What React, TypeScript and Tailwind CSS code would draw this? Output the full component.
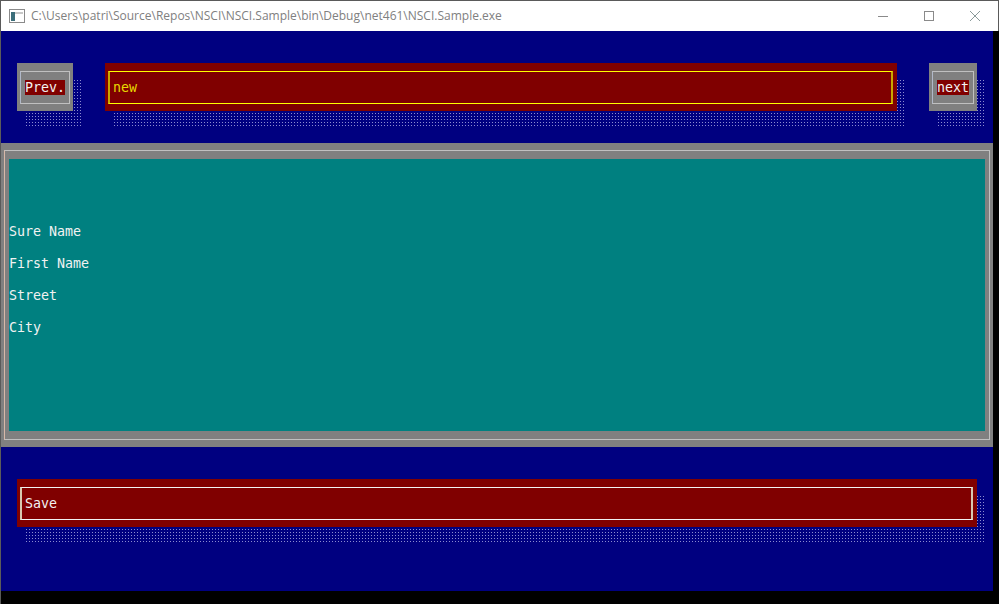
const mono = "font-['DejaVu_Sans_Mono','Liberation_Mono',monospace] text-[13.3px] leading-[16px]";

const Shadowed: React.FC<{ className: string; children: React.ReactNode }> = ({ className, children }) => (
  <div className={"relative shrink-0 " + className}>
    <div className="absolute left-2 top-4 w-full h-full bg-[radial-gradient(circle,#8c8cd0_0.7px,transparent_1px)] bg-[length:3px_3px]" />
    <div className="relative h-full">{children}</div>
  </div>
);

const NavButton: React.FC<{ label: string; width: string }> = ({ label, width }) => (
  <Shadowed className={width + " h-[48px]"}>
    <div className="h-full bg-[#808080] pt-[8px] pb-[7px] pl-[3px] pr-[3px]">
      <div className="h-full border border-[#c0c0c0] border-l-[#b0b8c8] flex items-center justify-center">
        <span className={mono + " bg-[#800000] text-[#f2f2f2] px-0 h-[15px] leading-[15px]"}>{label}</span>
      </div>
    </div>
  </Shadowed>
);

export default function App() {
  return (
    <div className="w-[999px] h-[604px] flex flex-col border-l border-t border-[#5a5a5a] bg-black overflow-hidden">
      {/* title bar */}
      <div className="h-[30px] bg-white flex items-center shrink-0 border-r border-[#5a5a5a]">
        <svg width="16" height="14" viewBox="0 0 16 14" className="ml-[8px]">
          <rect x="0.5" y="0.5" width="15" height="13" fill="#fff" stroke="#8a8a8a" />
          <rect x="2" y="3" width="4" height="9" fill="#3c6e7a" />
          <rect x="6" y="3" width="8" height="2" fill="#c8c8c8" />
        </svg>
        <span className="ml-[6px] text-[12px] text-[#808080] font-['Open_Sans','Noto_Sans',sans-serif]">
          C:\Users\patri\Source\Repos\NSCI\NSCI.Sample\bin\Debug\net461\NSCI.Sample.exe
        </span>
        <div className="ml-auto flex items-center">
          <svg width="46" height="30" viewBox="0 0 46 30">
            <line x1="18" y1="15.5" x2="28" y2="15.5" stroke="#8a8a8a" />
          </svg>
          <svg width="46" height="30" viewBox="0 0 46 30">
            <rect x="18.5" y="10.5" width="9" height="9" fill="none" stroke="#8a8a8a" />
          </svg>
          <svg width="46" height="30" viewBox="0 0 46 30">
            <path d="M18 10 L28 20 M28 10 L18 20" stroke="#8a9a9a" />
          </svg>
        </div>
      </div>

      {/* client */}
      <div className="flex h-[560px] shrink-0">
        <div className="w-[992px] h-full bg-[#000080] flex flex-col">
          <div className="mt-[32px] flex pl-[16px]">
            <NavButton label="Prev." width="w-[56px]" />
            <Shadowed className="ml-[32px] w-[792px] h-[48px]">
              <div className="h-full bg-[#800000] pt-[8px] pb-[7px] pl-[3px] pr-[4px]">
                <div className="h-full border-y border-y-[#ffff00] border-x-2 border-x-[#c8a800] flex items-center pl-[3px]">
                  <span className={mono + " text-[#e8d800]"}>new</span>
                </div>
              </div>
            </Shadowed>
            <div className="ml-[32px]">
              <NavButton label="next" width="w-[48px]" />
            </div>
          </div>

          <div className="mt-[32px] h-[304px] bg-[#808080] pt-[7px] pb-[7px] px-[3px]">
            <div className="h-full border border-[#c0c0c0] border-l-[#d8b8a8] px-[4px] py-[8px]">
              <div className="h-full bg-[#008080] pt-[65px] flex flex-col gap-[16px] text-[#f2f2f2]">
                <span className={mono}>Sure Name</span>
                <span className={mono}>First Name</span>
                <span className={mono}>Street</span>
                <span className={mono}>City</span>
              </div>
            </div>
          </div>

          <div className="mt-[32px] pl-[16px]">
            <Shadowed className="w-[960px] h-[48px]">
              <div className="h-full bg-[#800000] pt-[8px] pb-[7px] pl-[3px] pr-[4px]">
                <div className="h-full border-y border-y-[#f2f2f2] border-x-2 border-x-[#d8c8b0] flex items-center pl-[3px]">
                  <span className={mono + " text-[#f2f2f2]"}>Save</span>
                </div>
              </div>
            </Shadowed>
          </div>
        </div>
        <div className="flex-1 bg-black" />
      </div>
      <div className="flex-1 bg-black" />
    </div>
  );
}
